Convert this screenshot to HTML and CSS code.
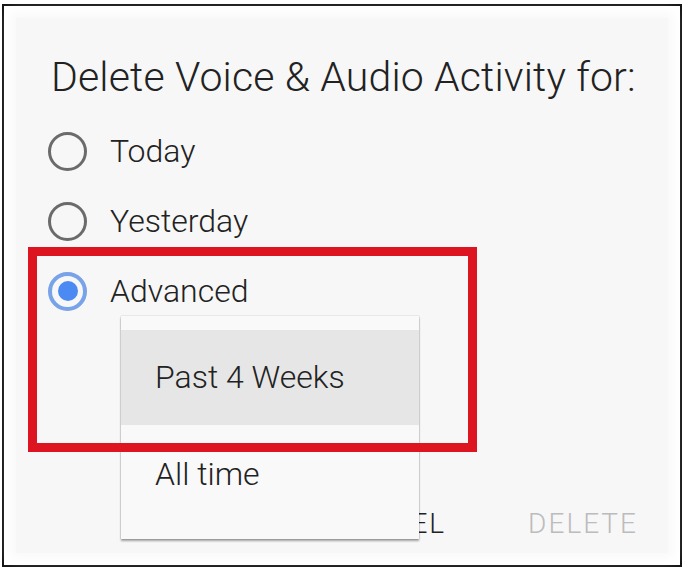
FILE: index.html
```html
<!DOCTYPE html>
<html lang="en">
<head>
<meta charset="utf-8">
<title>Delete Voice &amp; Audio Activity</title>
<link rel="stylesheet" href="styles.css">
</head>
<body>
<div class="frame">
  <div class="card">
    <h1 class="title">Delete Voice &amp; Audio Activity for:</h1>
    <div class="options">
      <div class="option"><span class="radio"></span><span class="label">Today</span></div>
      <div class="option"><span class="radio"></span><span class="label">Yesterday</span></div>
      <div class="option"><span class="radio checked"><span class="dot"></span></span><span class="label">Advanced</span></div>
    </div>
    <div class="spacer"></div>
    <div class="actions">
      <span class="btn cancel">CANCEL</span>
      <span class="btn delete">DELETE</span>
    </div>
    <div class="menu">
      <div class="menu-item active">Past 4 Weeks</div>
      <div class="menu-item">All time</div>
    </div>
    <div class="highlight"></div>
  </div>
</div>
</body>
</html>
```

FILE: styles.css
```css
html, body {
  margin: 0;
  padding: 0;
  background: #ffffff;
}
body {
  width: 690px;
  height: 574px;
  overflow: hidden;
  font-family: Roboto, "Liberation Sans", Arial, sans-serif;
}
.frame {
  box-sizing: border-box;
  width: 680px;
  height: 563px;
  margin: 4px 0 0 2px;
  border: 2px solid #151515;
  background: #ffffff;
  padding: 12px;
}
.card {
  position: relative;
  box-sizing: border-box;
  height: 100%;
  background: #f7f7f7;
  box-shadow: 0 0 10px 5px #f9f9f9;
  padding: 35px 30px 9px 35px;
  display: flex;
  flex-direction: column;
}
.title {
  margin: 0 0 15px 0;
  font-size: 41px;
  line-height: 48px;
  font-weight: 300;
  letter-spacing: 0.15px;
  color: #222;
  white-space: nowrap;
}
.options {
  display: flex;
  flex-direction: column;
  margin-left: -3px;
}
.option {
  display: flex;
  align-items: center;
  height: 70px;
  gap: 23px;
}
.radio {
  box-sizing: border-box;
  width: 39px;
  height: 39px;
  border-radius: 50%;
  border: 3.5px solid #6b6b6b;
  display: flex;
  align-items: center;
  justify-content: center;
}
.radio.checked {
  border: 4px solid #78a3e8;
}
.dot {
  width: 20px;
  height: 20px;
  border-radius: 50%;
  background: #4b8af2;
}
.label {
  font-size: 32px;
  line-height: 70px;
  font-weight: 300;
  color: #222;
}
.spacer {
  flex: 1;
}
.actions {
  display: flex;
  justify-content: flex-end;
  gap: 82px;
  line-height: 40px;
}
.btn {
  font-size: 28px;
  font-weight: 300;
  letter-spacing: 2px;
}
.cancel {
  color: #222;
}
.delete {
  color: #bcbcbc;
}
.menu {
  position: absolute;
  left: 105px;
  top: 298px;
  width: 298px;
  height: 223px;
  box-sizing: border-box;
  padding-top: 14px;
  background: #f9f9f9;
  box-shadow: 0 2px 2px rgba(0, 0, 0, 0.35), 0 0 1px rgba(0, 0, 0, 0.35);
}
.menu-item {
  height: 95px;
  line-height: 95px;
  padding-left: 34px;
  font-size: 32px;
  font-weight: 300;
  color: #222;
}
.menu-item.active {
  background: #e6e6e6;
}
.menu-item + .menu-item {
  height: 98px;
  line-height: 98px;
}
.highlight {
  position: absolute;
  left: 12px;
  top: 229px;
  width: 449px;
  height: 205px;
  box-sizing: border-box;
  border: 9px solid #dd1520;
}
```
